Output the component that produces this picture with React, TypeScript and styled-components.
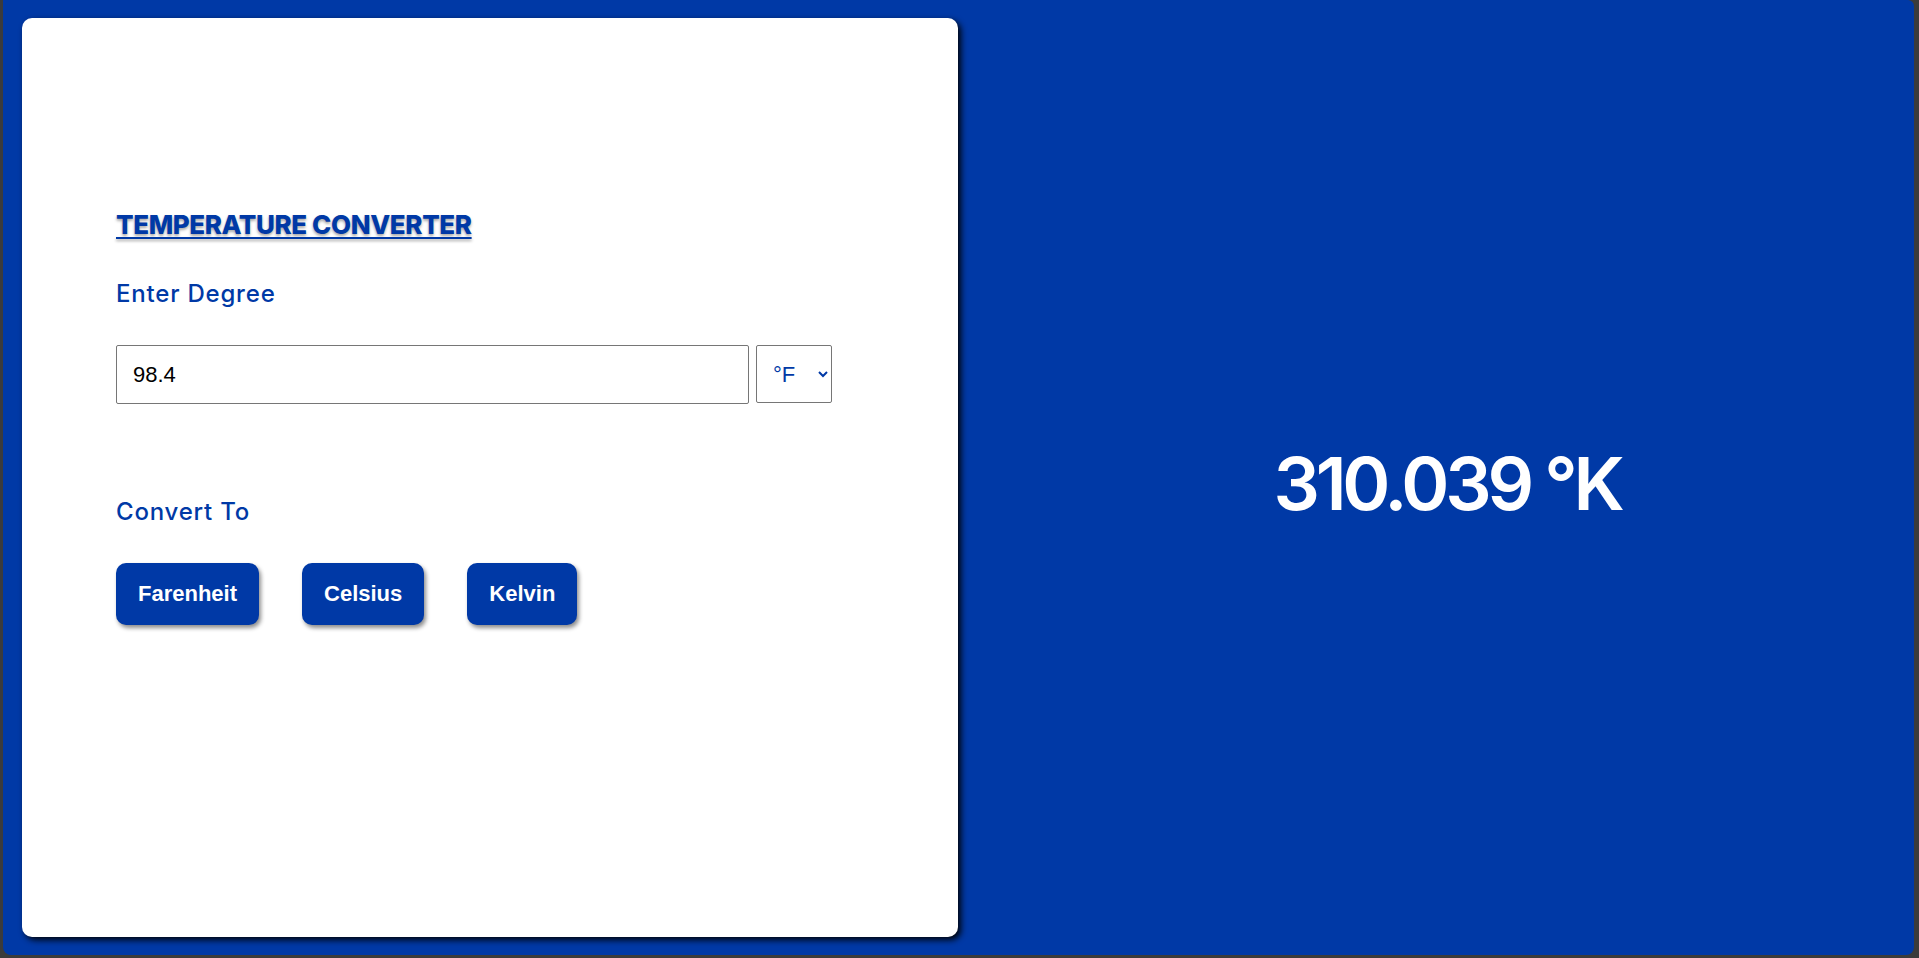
import { useState } from 'react';
import styled, { createGlobalStyle } from 'styled-components';

const BLUE = '#0039a6';

const GlobalStyle = createGlobalStyle`
  html, body {
    margin: 0;
    height: 100%;
    background: #3b3b3b;
  }
  #root {
    height: 100%;
  }
`;

const Frame = styled.div`
  box-sizing: border-box;
  height: calc(100vh - 3px);
  margin: 0 5px 0 3px;
  display: flex;
  padding: 18px 0 18px 19px;
  background: ${BLUE};
  border-radius: 0 6px 8px 8px;
`;

const Card = styled.div`
  box-sizing: border-box;
  width: 936px;
  height: 919px;
  padding: 190px 0 0 94px;
  background: #fff;
  border-radius: 10px;
  box-shadow: 3px 3px 6px rgba(0, 0, 0, 0.95);
  font-family: Inter, 'Noto Sans', sans-serif;
`;

const Title = styled.h1`
  margin: 0;
  font-size: 26px;
  line-height: 34px;
  font-weight: 800;
  letter-spacing: -0.4px;
  color: ${BLUE};
  text-decoration: underline;
  text-underline-offset: 3px;
  text-decoration-thickness: 2px;
  text-shadow: 0 2px 3px rgba(0, 0, 0, 0.35);
`;

const Label = styled.h3<{ $gap: number }>`
  margin: ${(p) => p.$gap}px 0 0;
  font-size: 24px;
  line-height: 28px;
  font-weight: 500;
  letter-spacing: 0.8px;
  color: ${BLUE};
`;

const InputRow = styled.div`
  display: flex;
  gap: 7px;
  margin-top: 37px;
`;

const DegreeInput = styled.input`
  box-sizing: border-box;
  width: 633px;
  height: 59px;
  padding: 0 16px;
  border: 1px solid #767676;
  border-radius: 2px;
  font-family: 'Liberation Sans', Arial, sans-serif;
  font-size: 22px;
  color: #000;
  outline: none;
`;

const UnitSelect = styled.select`
  box-sizing: border-box;
  width: 76px;
  height: 58px;
  padding: 0 6px 0 12px;
  border: 1px solid #767676;
  border-radius: 2px;
  background: #fff;
  font-family: 'Liberation Sans', Arial, sans-serif;
  font-size: 22px;
  color: ${BLUE};
`;

const Buttons = styled.div`
  display: flex;
  gap: 43px;
  margin-top: 37px;
`;

const ConvertButton = styled.button`
  padding: 18px 22px;
  border: none;
  border-radius: 10px;
  background: ${BLUE};
  color: #fff;
  font-family: 'Liberation Sans', Arial, sans-serif;
  font-size: 22px;
  line-height: 26px;
  font-weight: 700;
  box-shadow: 2px 3px 4px rgba(0, 0, 0, 0.45);
  cursor: pointer;
`;

const Result = styled.div`
  flex: 1;
  display: flex;
  align-items: center;
  justify-content: center;
  padding: 12px 0 0 22px;
`;

const Value = styled.div`
  font-family: Inter, 'Noto Sans', sans-serif;
  font-size: 73px;
  font-weight: 600;
  letter-spacing: -4.2px;
  color: #fff;
`;

type Unit = 'F' | 'C' | 'K';

const toKelvin = (v: number, u: Unit) =>
  u === 'K' ? v : u === 'C' ? v + 273.15 : (v - 32) * (5 / 9) + 273.15;

const fromKelvin = (k: number, u: Unit) =>
  u === 'K' ? k : u === 'C' ? k - 273.15 : (k - 273.15) * (9 / 5) + 32;

export default function App() {
  const [degree, setDegree] = useState('98.4');
  const [unit, setUnit] = useState<Unit>('F');
  const [target, setTarget] = useState<Unit>('K');

  const out = fromKelvin(toKelvin(parseFloat(degree) || 0, unit), target);
  const text = `${Number(out.toFixed(3))} °${target}`;

  return (
    <>
      <GlobalStyle />
      <Frame>
        <Card>
          <Title>TEMPERATURE CONVERTER</Title>
          <Label $gap={38}>Enter Degree</Label>
          <InputRow>
            <DegreeInput value={degree} onChange={(e) => setDegree(e.target.value)} />
            <UnitSelect value={unit} onChange={(e) => setUnit(e.target.value as Unit)}>
              <option value="F">°F</option>
              <option value="C">°C</option>
              <option value="K">°K</option>
            </UnitSelect>
          </InputRow>
          <Label $gap={94}>Convert To</Label>
          <Buttons>
            <ConvertButton onClick={() => setTarget('F')}>Farenheit</ConvertButton>
            <ConvertButton onClick={() => setTarget('C')}>Celsius</ConvertButton>
            <ConvertButton onClick={() => setTarget('K')}>Kelvin</ConvertButton>
          </Buttons>
        </Card>
        <Result>
          <Value>{text}</Value>
        </Result>
      </Frame>
    </>
  );
}
